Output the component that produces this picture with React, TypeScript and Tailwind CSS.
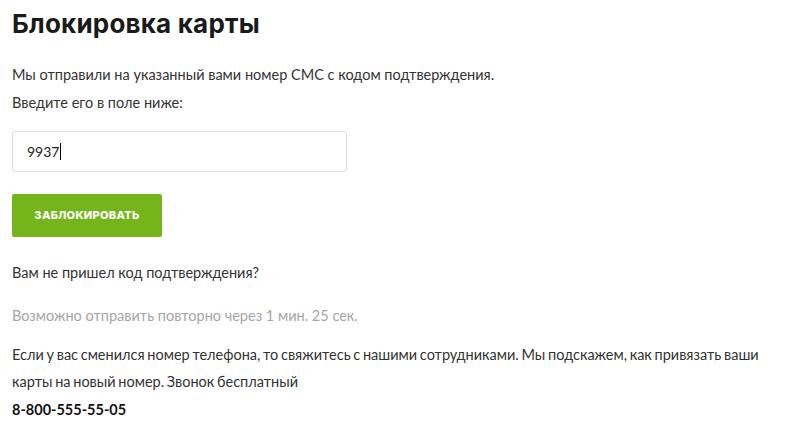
export default function App() {
  return (
    <div className="min-h-[437px] w-[800px] bg-white px-3 text-[14.5px] text-[#333] font-['Lato',sans-serif]">
      <h1 className="pt-[8px] text-[26px] font-bold leading-[32px] text-[#1a1a1a] font-['Inter',sans-serif] tracking-[0.2px]">
        Блокировка карты
      </h1>

      <div className="mt-[21px] leading-[28px]">
        <p>Мы отправили на указанный вами номер СМС с кодом подтверждения.</p>
        <p>Введите его в поле ниже:</p>
      </div>

      <div className="mt-[14px] flex h-[41px] w-[335px] items-center rounded-[3px] border border-[#dcdcdc] pl-[14px] text-[14px] text-[#222]">
        <span>9937</span>
        <span className="ml-[1px] h-[17px] w-[1px] bg-black" />
      </div>

      <button className="mt-[22px] flex h-[43px] w-[150px] items-center justify-center rounded-[2px] bg-[#75b51c] text-[11px] font-extrabold uppercase tracking-[0.3px] text-white font-['Inter',sans-serif]">
        Заблокировать
      </button>

      <p className="mt-[22px] leading-[28px]">Вам не пришел код подтверждения?</p>
      <p className="mt-[15px] leading-[28px] text-[#a5a5a5]">
        Возможно отправить повторно через 1 мин. 25 сек.
      </p>
      <p className="mt-[11px] whitespace-nowrap leading-[27px] [word-spacing:-1px]">
        Если у вас сменился номер телефона, то свяжитесь с нашими сотрудниками. Мы подскажем, как привязать ваши
        <br />
        карты на новый номер. Звонок бесплатный
      </p>
      <p className="mt-[3px] font-bold leading-[24px] text-[#111]">8-800-555-55-05</p>
    </div>
  );
}
